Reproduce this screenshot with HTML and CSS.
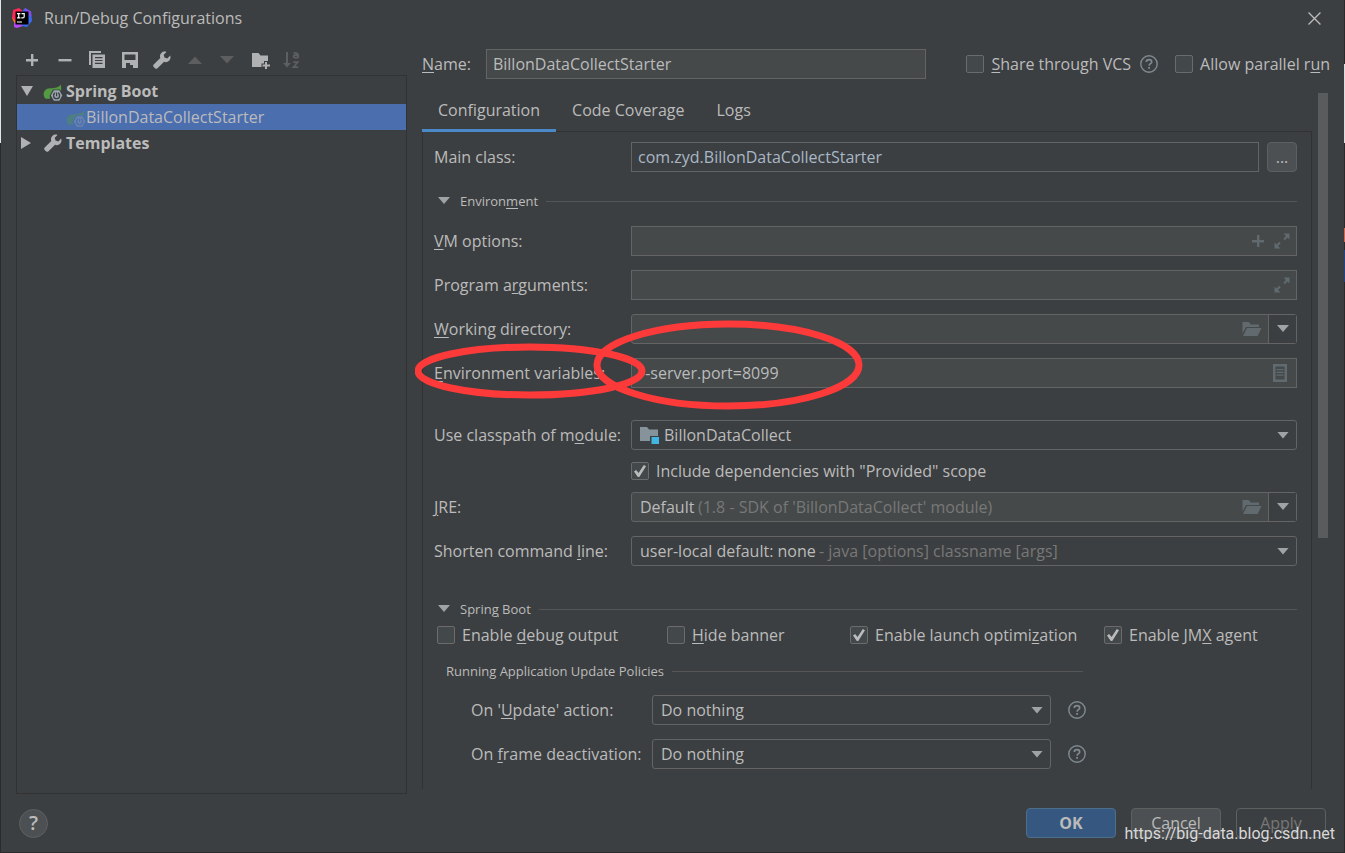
FILE: index.html
```html
<!DOCTYPE html>
<html lang="en">
<head>
<meta charset="utf-8">
<title>Run/Debug Configurations</title>
<link rel="stylesheet" href="styles.css">
</head>
<body>
<svg class="symbols" aria-hidden="true">
  <symbol id="plus" viewBox="0 0 20 20"><path fill="currentColor" d="M9 4h2.400v5H16v2.400h-4.600V16H9v-4.600H4V9h5z"/></symbol>
  <symbol id="wrench" viewBox="0 0 20 20"><path fill="currentColor" d="M18.200 5.600 15.300 8.400 12.500 7.600 11.700 4.800 14.500 1.900C12.700 1.200 10.700 1.600 9.400 3 8 4.300 7.700 6.200 8.300 7.900L1.700 14.500c-.7.7-.7 1.800 0 2.500l1.300 1.300c.7.7 1.800.7 2.500 0L12.100 11.800c1.700.7 3.700.3 5-1 1.400-1.400 1.800-3.400 1.100-5.200z"/></symbol>
  <symbol id="expand" viewBox="0 0 16 16"><path fill="currentColor" d="M9.500.5h6v6l-2-2-2.700 2.700-1.500-1.500L12 3zM.5 9.500l2 2 2.700-2.700 1.500 1.500L4 13l2.500 2.500h-6z"/></symbol>
  <symbol id="folder-open" viewBox="0 0 20 16"><path fill="currentColor" d="M.5 1h6.300l2 2.500H17V6H4L.5 12.500zM5 7h14.500l-3.800 8H1z"/></symbol>
  <symbol id="help" viewBox="0 0 18 18"><circle cx="9" cy="9" r="8.200" fill="none" stroke="currentColor" stroke-width="1.400"/><path fill="none" stroke="currentColor" stroke-width="1.600" d="M6.300 7.100C6.300 5.400 7.500 4.600 9 4.600s2.700.9 2.700 2.300c0 1.800-2.600 1.900-2.600 3.900"/><path fill="currentColor" d="M8.200 12h1.800v1.800H8.200z"/></symbol>
  <symbol id="spring" viewBox="0 0 20 18"><path fill="#549a43" d="M17.800.5c.9 4.700.5 9-2.300 11.500-2 2-4.600 2.400-7.500 2-1.600.8-3.500 1-5.300.7C.5 13.200-.2 9.600 1.600 7 4.200 3.200 8.500 5 12.500 3.800 15 3.100 16.700 2.200 17.800.5z"/><path fill="var(--spring-bg)" d="M10 5.500h7l3 4.500v8H9L6.500 12z"/><path fill="#9aa7b0" d="M10.900 6.300h5.400l3 5.200-3 5.300h-5.400l-3-5.300z"/><circle cx="13.600" cy="11.700" r="3" fill="none" stroke="var(--spring-bg)" stroke-width="1.300"/><path fill="#9aa7b0" d="M12.200 7.800H15v3h-2.800z"/><path fill="var(--spring-bg)" d="M13 8.400h1.200v3.800H13z"/></symbol>
</svg>

<div class="dialog">
  <header class="titlebar">
    <svg class="logo" viewBox="0 0 20 20" aria-hidden="true">
      <path fill="#fc801d" d="M0 10l4-3 2 8-3 1z"/>
      <path fill="#fe2857" d="M1 2 7 0l6 5-8 9-5-4z"/>
      <path fill="#b74af7" d="M2 15l6-2 3 5-6 2-3-1z"/>
      <path fill="#3b6bf0" d="M13 0l6 3.500 1 9.500-5 6-5-1-2-12z"/>
      <path fill="#8a4be8" d="M13 0l6 3.500.4 5L14 6z"/>
      <path fill="#000" d="M3.500 3.500h13v13h-13z"/>
      <path fill="none" stroke="#fff" stroke-width="1.200" d="M5 5.600h3.400M6.700 5.600v4.200M5 9.800h3.400M9.500 5.600h2.700v2.800q0 1.500-1.400 1.500H9.300M5 14h5"/>
    </svg>
    <h1 class="title">Run/Debug Configurations</h1>
    <button class="close" type="button" aria-label="Close"><svg viewBox="0 0 12 12"><path fill="none" stroke="currentColor" stroke-width="1.200" d="M.5.5l11 11M11.500.5l-11 11"/></svg></button>
  </header>

  <div class="columns">
    <aside class="sidebar">
      <div class="toolbar">
        <button type="button" aria-label="Add"><svg><use href="#plus"/></svg></button>
        <button type="button" aria-label="Remove"><svg viewBox="0 0 20 20"><path fill="currentColor" d="M3.500 9h13v2.400h-13z"/></svg></button>
        <button type="button" aria-label="Copy"><svg viewBox="0 0 20 20"><path fill="currentColor" d="M2 1h12v2H4v12H2z"/><path fill="currentColor" fill-rule="evenodd" d="M5.500 4.500H18V18H5.500zM8 7v1.200h7.500V7zm0 2.900v1.200h7.500V9.900zm0 2.900V14h7.500v-1.200z"/></svg></button>
        <button type="button" aria-label="Save"><svg viewBox="0 0 20 20"><path fill="currentColor" fill-rule="evenodd" d="M2 2h16v16H2zM4.500 4.500V10h11V4.500zM6 13v5h7v-3h-3v-2z"/></svg></button>
        <button type="button" aria-label="Edit templates"><svg><use href="#wrench"/></svg></button>
        <button type="button" aria-label="Move up" disabled><svg viewBox="0 0 20 20"><path fill="currentColor" d="M3 14 10 6.500 17 14z"/></svg></button>
        <button type="button" aria-label="Move down" disabled><svg viewBox="0 0 20 20"><path fill="currentColor" d="M3 6h14l-7 7.500z"/></svg></button>
        <button type="button" aria-label="New folder"><svg viewBox="0 0 20 20"><path fill="currentColor" d="M2 3h6.500l2 2.500H18V11h-4v2.500h-2.500V17H2z"/><path fill="currentColor" d="M15 12h2v2.500h3v2h-3V19h-2v-2.500h-2.500v-2H15z"/></svg></button>
        <button type="button" aria-label="Sort" disabled><svg viewBox="0 0 20 20"><path fill="currentColor" d="M4 2h2v11h3l-4 4.500L1 13h3z"/><path fill="none" stroke="currentColor" stroke-width="1.700" d="M11.500 3.500q2-1.200 3.700 0t.8 4.700M16 5.200h-3q-1.700.3-1.500 1.500.2 1.200 2 1.100 1.500 0 2.500-1M11.200 12.200h4.500l-4.300 4.900h4.900"/></svg></button>
      </div>
      <ul class="tree">
        <li class="node bold"><svg class="arrow" viewBox="0 0 12 12"><path fill="currentColor" d="M0 1h12L6 11z"/></svg><svg class="spring"><use href="#spring"/></svg>Spring Boot</li>
        <li class="node selected"><svg class="spring faded"><use href="#spring"/></svg>BillonDataCollectStarter</li>
        <li class="node bold"><svg class="arrow" viewBox="0 0 12 12"><path fill="currentColor" d="M0 0v12l10-6z"/></svg><svg class="wrench"><use href="#wrench"/></svg>Templates</li>
      </ul>
    </aside>

    <main class="content">
      <div class="name-row">
        <label for="name"><u>N</u>ame:</label>
        <input class="field name" id="name" type="text" value="BillonDataCollectStarter">
        <label class="check"><input type="checkbox"><span><u>S</u>hare through VCS</span></label>
        <button class="help" type="button" aria-label="About sharing"><svg><use href="#help"/></svg></button>
        <label class="check"><input type="checkbox"><span>Allow parallel r<u>u</u>n</span></label>
      </div>

      <div class="scroll-area">
        <div class="scroll-view">
          <div class="tabs" role="tablist">
            <button class="tab active" type="button" role="tab" aria-selected="true">Configuration</button>
            <button class="tab" type="button" role="tab">Code Coverage</button>
            <button class="tab" type="button" role="tab">Logs</button>
          </div>

          <form class="panel">
            <div class="row">
              <label for="main-class">Main class:</label>
              <div class="with-button">
                <input class="field dark" id="main-class" type="text" value="com.zyd.BillonDataCollectStarter">
                <button class="browse" type="button" aria-label="Browse classes">...</button>
              </div>
            </div>

            <h2 class="heading environment"><svg class="fold" viewBox="0 0 12 8"><path fill="currentColor" d="M0 0h12L6 7z"/></svg><span>Environ<u>m</u>ent</span></h2>

            <div class="rows">
              <div class="row">
                <label for="vm"><u>V</u>M options:</label>
                <div class="box">
                  <input id="vm" type="text">
                  <button type="button" aria-label="Insert macro"><svg class="i20"><use href="#plus"/></svg></button>
                  <button type="button" aria-label="Expand"><svg class="i16"><use href="#expand"/></svg></button>
                </div>
              </div>
              <div class="row">
                <label for="args">Program a<u>r</u>guments:</label>
                <div class="box">
                  <input id="args" type="text">
                  <button type="button" aria-label="Expand"><svg class="i16"><use href="#expand"/></svg></button>
                </div>
              </div>
              <div class="row">
                <label for="dir"><u>W</u>orking directory:</label>
                <div class="box combo">
                  <input id="dir" type="text">
                  <button type="button" aria-label="Browse"><svg class="folder"><use href="#folder-open"/></svg></button>
                  <button class="drop" type="button" aria-label="Recent"><svg class="fold" viewBox="0 0 12 8"><path fill="currentColor" d="M0 0h12L6 7z"/></svg></button>
                </div>
              </div>
              <div class="row annotated">
                <label for="env"><u>E</u>nvironment variables:</label>
                <div class="box">
                  <input id="env" type="text" value="--server.port=8099">
                  <button type="button" aria-label="Edit variables"><svg class="doc" viewBox="0 0 14 18"><path fill="currentColor" fill-rule="evenodd" d="M0 0h14v18H0zm2.500 2.500v13h9v-13z"/><path fill="currentColor" d="M3.500 5h7v1.200h-7zm0 2.800h7V9h-7zm0 2.700h7v1.200h-7z"/></svg></button>
                </div>
                <svg class="marks" viewBox="0 0 448 92" aria-hidden="true"><g fill="none" stroke="#fc3a3a" stroke-width="7"><ellipse cx="115" cy="51" rx="112" ry="24"/><ellipse cx="313" cy="45" rx="131" ry="41"/></g></svg>
              </div>
            </div>

            <div class="row module">
              <label for="module">Use classpath of m<u>o</u>dule:</label>
              <div class="select has-icon">
                <svg class="module-icon" viewBox="0 0 20 18" aria-hidden="true"><path fill="#87939a" d="M0 1h7l2 2.500h9V10h-8v5H0z"/><path fill="#40b6e0" d="M11.500 11H19v7h-7.500z"/></svg>
                <select id="module"><option>BillonDataCollect</option></select>
              </div>
            </div>
            <div class="row include">
              <label class="check"><input type="checkbox" checked><span>Include dependencies with "Provided" scope</span></label>
            </div>
            <div class="rows">
              <div class="row">
                <label for="jre"><u>J</u>RE:</label>
                <div class="box combo">
                  <input id="jre" type="text" value="Default">
                  <span class="hint jre-hint">(1.8 - SDK of 'BillonDataCollect' module)</span>
                  <button type="button" aria-label="Browse"><svg class="folder"><use href="#folder-open"/></svg></button>
                  <button class="drop" type="button" aria-label="Choose JRE"><svg class="fold" viewBox="0 0 12 8"><path fill="currentColor" d="M0 0h12L6 7z"/></svg></button>
                </div>
              </div>
              <div class="row">
                <label for="shorten">Shorten command <u>l</u>ine:</label>
                <div class="select">
                  <select id="shorten"><option>user-local default: none</option></select>
                  <span class="hint shorten-hint">- java [options] classname [args]</span>
                </div>
              </div>
            </div>

            <h2 class="heading spring-heading"><svg class="fold" viewBox="0 0 12 8"><path fill="currentColor" d="M0 0h12L6 7z"/></svg><span>Sprin<u>g</u> Boot</span></h2>

            <div class="checks">
              <label class="check"><input type="checkbox"><span>Enable <u>d</u>ebug output</span></label>
              <label class="check"><input type="checkbox"><span><u>H</u>ide banner</span></label>
              <label class="check"><input type="checkbox" checked><span>Enable launch optimi<u>z</u>ation</span></label>
              <label class="check"><input type="checkbox" checked><span>Enable JM<u>X</u> agent</span></label>
            </div>

            <section class="policies">
              <h3 class="heading"><span>Running Application Update Policies</span></h3>
              <div class="policy-rows">
                <div class="policy">
                  <label for="on-update">On '<u>U</u>pdate' action:</label>
                  <div class="select"><select id="on-update"><option>Do nothing</option></select></div>
                  <button class="help" type="button" aria-label="About update action"><svg><use href="#help"/></svg></button>
                </div>
                <div class="policy">
                  <label for="on-frame">On <u>f</u>rame deactivation:</label>
                  <div class="select"><select id="on-frame"><option>Do nothing</option></select></div>
                  <button class="help" type="button" aria-label="About frame deactivation"><svg><use href="#help"/></svg></button>
                </div>
              </div>
            </section>
          </form>
        </div>
        <div class="scrollbar"><div class="thumb"></div></div>
      </div>
    </main>
  </div>

  <footer class="footer">
    <button class="round-help" type="button" aria-label="Help">?</button>
    <div class="actions">
      <button class="button primary" type="button">OK</button>
      <button class="button" type="button">Cancel</button>
      <button class="button" type="button" disabled>Apply</button>
    </div>
    <span class="watermark">https://big-data.blog.csdn.net</span>
  </footer>
</div>
</body>
</html>
```
FILE: styles.css
```css
:root {
  --bg: #3c3f41;
  --field: #45494a;
  --line: #646464;
  --edge: #323232;
  --text: #bbbbbb;
  --icon: #afb1b3;
  --spring-bg: #3c3f41;
}
* { box-sizing: border-box; }
body {
  margin: 0;
  min-height: 100vh;
  display: flex;
  background:
    linear-gradient(#e4e4e4 0 143px, #2b2b2b 143px) left / 1px 100% no-repeat,
    linear-gradient(#2b2b2b 0 64px, #dcdcdc 64px 143px, #2b2b2b 143px 228px, #d0664a 228px 242px, #2b2b2b 242px 250px, #214283 250px 282px, #2b2b2b 282px) right / 1px 100% no-repeat,
    #2b2b2b;
  color: var(--text);
  font: 16px/20px "Open Sans", "Noto Sans", sans-serif;
}
button, input, select { font: inherit; color: inherit; margin: 0; padding: 0; }
button { background: none; border: 0; }
svg { display: block; flex: none; }
u { text-underline-offset: 2px; text-decoration-thickness: 1px; }
h1, h2, h3, ul { margin: 0; padding: 0; font-weight: 400; }
.symbols { position: absolute; width: 0; height: 0; }

.dialog {
  flex: 1;
  min-width: 0;
  display: flex;
  flex-direction: column;
  margin: 0 1px 1px;
  background: var(--bg);
}

.titlebar { display: flex; align-items: center; height: 36px; padding: 0 23px 0 11px; gap: 12px; }
.logo { width: 20px; height: 20px; }
.title { flex: 1; font-size: 16px; }
.close svg { width: 13px; height: 13px; }

.columns { flex: 1; display: flex; gap: 15px; padding-left: 15px; }
.sidebar { flex: none; width: 391px; display: flex; flex-direction: column; }
.toolbar {
  display: flex;
  justify-content: space-between;
  align-items: center;
  width: 280px;
  height: 39px;
  margin-left: 6px;
  padding-top: 9px;
  color: var(--icon);
}
.toolbar svg { width: 20px; height: 20px; }
.toolbar button:disabled { color: #5c5e60; }
.tree { flex: 1; list-style: none; border: 1px solid var(--edge); padding-top: 2px; }
.node { display: flex; align-items: center; height: 26px; padding-left: 4px; }
.bold { font-weight: 700; }
.selected { --spring-bg: #4b6eaf; background: #4b6eaf; padding-left: 49px; }
.arrow { width: 12px; height: 12px; margin-right: 10px; color: var(--icon); }
.spring { width: 20px; height: 18px; margin-right: 3px; margin-top: 4px; }
.selected .spring { margin-right: 0; }
.faded { opacity: 0.4; }
.wrench { width: 20px; height: 20px; margin-right: 3px; color: var(--icon); }

.content { flex: 1; min-width: 0; display: flex; flex-direction: column; padding-right: 14px; }
.name-row { display: flex; align-items: center; height: 30px; margin-top: 13px; margin-bottom: 14px; }
.name-row label { white-space: nowrap; }
.field {
  height: 30px;
  min-width: 0;
  flex: 1;
  border: 1px solid var(--line);
  background: var(--field);
  padding: 0 6px;
}
.dark { background: var(--bg); color: #a9b7c6; }
.name { margin: 0 40px 0 15px; }
.help { color: #7f8b91; margin: 0 17px 0 9px; }
.help svg { width: 18px; height: 18px; }

.check { display: flex; align-items: center; gap: 7px; white-space: nowrap; }
.check input {
  appearance: none;
  flex: none;
  width: 18px;
  height: 18px;
  border: 1px solid #6b6b6b;
  border-radius: 2px;
  background: #43494a;
}
.check input:checked::before {
  content: "";
  display: block;
  width: 12px;
  height: 12px;
  margin: 2px;
  background: var(--text);
  clip-path: polygon(0 54%, 18% 42%, 38% 66%, 82% 0, 100% 10%, 44% 100%, 32% 100%);
}

.scroll-area { flex: 1; display: flex; gap: 6px; padding-bottom: 5px; }
.scroll-view { flex: 1; min-width: 0; display: flex; flex-direction: column; }
.scrollbar { width: 10px; margin-right: 2px; }
.thumb { height: 64%; background: #595b5d; }

.tabs { display: flex; height: 39px; border-bottom: 1px solid var(--edge); }
.tab { height: 39px; padding: 0 16px 3px; border-bottom: 3px solid transparent; }
.active { border-color: #4a88c7; }

.panel { flex: 1; padding: 10px 14px 20px 11px; border: 1px solid var(--edge); border-width: 0 1px; }
.rows { display: grid; gap: 14px; }
.row { display: grid; grid-template-columns: 197px minmax(0, 1fr); align-items: center; min-height: 30px; }
.with-button { display: flex; gap: 8px; }
.browse {
  width: 30px;
  height: 30px;
  border: 1px solid #5e6060;
  border-radius: 4px;
  background: #4c5052;
}

.heading {
  display: flex;
  align-items: center;
  height: 20px;
  font-size: 13px;
}
.heading::after { content: ""; flex: 1; height: 1px; margin-left: 8px; background: #555; }
.environment { margin: 19px 0 15px; }
.spring-heading { margin: 33px 0 6px; }
.heading .fold { margin: 0 10px 0 4px; }
.fold { width: 12px; height: 8px; color: #a0a3a5; }

.box {
  display: flex;
  align-items: center;
  position: relative;
  height: 30px;
  border: 1px solid var(--line);
  background: var(--field);
  color: var(--text);
}
.box input {
  flex: 1;
  min-width: 0;
  height: 100%;
  border: 0;
  background: none;
  padding: 0 8px;
}
.box button { margin-right: 6px; color: #616a6e; }
.i20 { width: 20px; height: 20px; }
.i16 { width: 16px; height: 16px; }
.folder { width: 20px; height: 16px; }
.doc { width: 14px; height: 18px; margin-right: 3px; }
.combo { border-radius: 3px; }
.box .drop {
  display: grid;
  place-items: center;
  width: 28px;
  height: 100%;
  margin: 0;
  border-left: 1px solid var(--line);
  background: var(--bg);
}
.drop .fold { color: #a0a3a5; }
.annotated { position: relative; }
.marks { position: absolute; left: -19px; top: -38px; width: 448px; height: 92px; pointer-events: none; }

.module { margin-top: 32px; }
.select { position: relative; display: flex; align-items: center; min-width: 0; }
.select select {
  appearance: none;
  flex: 1;
  min-width: 0;
  height: 30px;
  border: 1px solid var(--line);
  border-radius: 3px;
  background: var(--bg);
  padding: 0 30px 0 8px;
}
.select::after {
  content: "";
  position: absolute;
  right: 8px;
  width: 12px;
  height: 7px;
  background: #a0a3a5;
  clip-path: polygon(0 0, 100% 0, 50% 100%);
  pointer-events: none;
}
.has-icon select { padding-left: 32px; }
.module-icon { position: absolute; left: 9px; width: 20px; height: 18px; }
.hint { position: absolute; color: #787878; pointer-events: none; white-space: nowrap; }
.jre-hint { left: 66px; }
.shorten-hint { left: 188px; }
.include { min-height: 42px; }
.include .check { grid-column: 2; }

.checks { display: grid; grid-template-columns: 230px 183px 254px 1fr; margin-left: 3px; }
.policies { max-width: 637px; margin: 16px 0 0 12px; }
.policy-rows { display: grid; gap: 14px; margin: 14px -3px 0 25px; }
.policy { display: grid; grid-template-columns: 181px minmax(0, 1fr) auto; align-items: center; }
.policy .help { margin: 0 0 0 17px; }

.footer {
  position: relative;
  display: flex;
  justify-content: space-between;
  align-items: center;
  height: 58px;
  padding: 0 18px;
}
.round-help {
  width: 29px;
  height: 29px;
  border: 1px solid #5e6060;
  border-radius: 50%;
  background: #4c5052;
  font-size: 20px;
  font-weight: 600;
}
.actions { display: flex; gap: 15px; }
.button {
  width: 90px;
  height: 30px;
  border: 1px solid #5e6060;
  border-radius: 4px;
  background: #4c5052;
}
.button:disabled { background: none; color: #777; }
.primary { background: #365880; border-color: #4c708c; font-weight: 700; }
.watermark {
  position: absolute;
  right: 9px;
  bottom: 8px;
  color: #d8d8d8;
  font: 16px/20px Roboto, "Liberation Sans", sans-serif;
  pointer-events: none;
}
```
